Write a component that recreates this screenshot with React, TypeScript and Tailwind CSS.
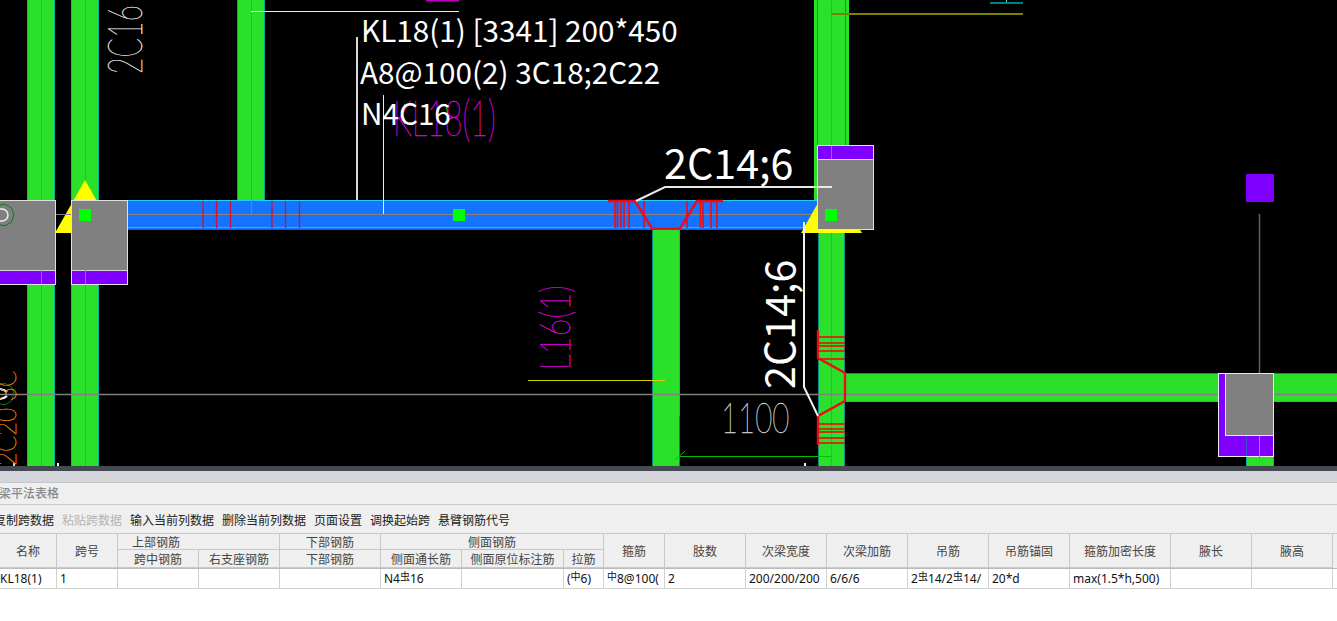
const GREEN = "#2be02b";
const PURPLE = "#8000ff";
const RED = "#f00a14";
const CAD_FONT = "'Noto Sans CJK SC', sans-serif";
const THIN_FONT = "Lato, 'Liberation Sans', sans-serif";

const columnWidths = "grid-cols-[57px_61px_81px_81px_101px_81px_102px_40px_61px_81px_81px_81px_81px_81px_101px_81px_81px]";

function Column({ x, y, w, h, edge = "#00b8a0" }: { x: number; y: number; w: number; h: number; edge?: string }) {
  return (
    <g>
      <rect x={x} y={y} width={w} height={h} fill={GREEN} />
      <rect x={x} y={y} width={1} height={h} fill={edge} />
      <rect x={x + w - 1} y={y} width={1} height={h} fill={edge} />
    </g>
  );
}

function GrayBox({ x, y, w, h, capTop, cap }: { x: number; y: number; w: number; h: number; capTop: boolean; cap: number }) {
  const capY = capTop ? y : y + h - cap;
  return (
    <g>
      <rect x={x + 0.5} y={y + 0.5} width={w} height={h} fill="#808080" />
      <rect x={x + 0.5} y={capY + 0.5} width={w} height={cap} fill={PURPLE} stroke="#d8d8d8" />
      <rect x={x + 0.5} y={y + 0.5} width={w} height={h} fill="none" stroke="#e0e0e0" />
    </g>
  );
}

function Stirrups() {
  const leftBars = [203, 216.5, 230.5, 272, 285.5, 299.5];
  const rightBars = [615, 617.5, 621, 624, 629, 644, 687, 700.5, 703, 711, 717];
  const upperRungs = [337, 343, 346, 351, 359];
  const lowerRungs = [424, 429, 432, 438, 443];
  return (
    <g stroke={RED} fill="none">
      {leftBars.map((x) => (
        <line key={x} x1={x} y1={201} x2={x} y2={228} stroke="#d01030" strokeWidth={1.3} />
      ))}
      {rightBars.map((x) => (
        <line key={x} x1={x} y1={201} x2={x} y2={228} strokeWidth={1.6} />
      ))}
      <polyline points="608,201 635,201 652,228.5 680,228.5 697,201 723,201" strokeWidth={2.4} />
      {upperRungs.map((y) => (
        <line key={y} x1={818} y1={y} x2={845} y2={y} strokeWidth={1.6} />
      ))}
      {lowerRungs.map((y) => (
        <line key={y} x1={818} y1={y} x2={845} y2={y} strokeWidth={1.6} />
      ))}
      <polyline points="818,330 818,358 845,373 845,401 818,416 818,445" strokeWidth={2.4} />
    </g>
  );
}

function Heptagon({ cx, cy }: { cx: number; cy: number }) {
  const points = Array.from({ length: 9 }, (_, i) => {
    const a = (i / 9) * Math.PI * 2;
    return `${(cx + Math.cos(a) * 11).toFixed(1)},${(cy + Math.sin(a) * 11).toFixed(1)}`;
  }).join(" ");
  return <polygon points={points} fill="none" stroke="#0a7a18" strokeWidth={1} />;
}

function Drawing() {
  return (
    <svg width={1337} height={466} viewBox="0 0 1337 466" className="block">
      <rect width={1337} height={466} fill="#000" />

      {/* columns and beams */}
      <Column x={27} y={0} w={28} h={466} />
      <Column x={71} y={0} w={28} h={466} />
      <Column x={237} y={0} w={28} h={200} edge="#00a890" />
      <Column x={652} y={229} w={28} h={237} edge="#008a70" />
      <rect x={814} y={0} width={35} height={200} fill={GREEN} />
      <rect x={817} y={0} width={1} height={230} fill="#0a8f80" />
      <rect x={845} y={0} width={1} height={145} fill="#0a8f80" />
      <Column x={818} y={229} w={27} h={237} edge="#0a8f80" />
      <rect x={845} y={373} width={492} height={28} fill={GREEN} />
      <rect x={845} y={373} width={492} height={1} fill="#0a8f80" />
      <rect x={845} y={401} width={492} height={1} fill="#00c8a0" />
      <Column x={1246} y={456} w={28} h={10} />

      <rect x={127} y={200} width={691} height={29} fill="#1474ff" />
      <rect x={127} y={200} width={691} height={1} fill="#20d0f0" />
      <rect x={127} y={227} width={691} height={1} fill="#40a8ff" />
      <rect x={127} y={229} width={691} height={1} fill="#1a6a90" />

      {/* axis lines */}
      <g stroke="#808080" strokeWidth={1}>
        <line x1={41.5} y1={0} x2={41.5} y2={466} />
        <line x1={85.5} y1={0} x2={85.5} y2={466} />
        <line x1={251.5} y1={0} x2={251.5} y2={214} />
        <line x1={831.5} y1={0} x2={831.5} y2={466} />
        <line x1={679.5} y1={229} x2={679.5} y2={416} />
        <line x1={55} y1={214.5} x2={818} y2={214.5} stroke="#8f8078" />
        <line x1={0} y1={394.5} x2={1337} y2={394.5} strokeWidth={1.4} />
        <line x1={1259.5} y1={214} x2={1259.5} y2={373} stroke="#606060" strokeWidth={1.5} />
      </g>

      {/* supports */}
      <polygon points="85,180 55,233 115,233" fill="#ffff00" />
      <polygon points="831,180 801,233 862,233" fill="#ffff00" />
      <line x1={55} y1={214.5} x2={71} y2={214.5} stroke="#808080" />
      <GrayBox x={-2} y={200} w={57} h={84} capTop={false} cap={14} />
      <GrayBox x={71} y={200} w={56} h={84} capTop={false} cap={14} />
      <GrayBox x={817} y={145} w={56} h={84} capTop cap={14} />
      <line x1={85.5} y1={270} x2={85.5} y2={284} stroke="#808080" />
      <line x1={41.5} y1={270} x2={41.5} y2={284} stroke="#808080" />
      <line x1={831.5} y1={146} x2={831.5} y2={159} stroke="#808080" />
      <rect x={79} y={209} width={12} height={12} fill="#00ff00" />
      <rect x={825} y={209} width={12} height={12} fill="#00ff00" />
      <rect x={453} y={209} width={12} height={12} fill="#00ff00" />
      <rect x={1218.5} y={373.5} width={55} height={83} fill={PURPLE} stroke="#f0f0f0" />
      <rect x={1225.5} y={373.5} width={48} height={62} fill="#808080" stroke="#e8e8e8" />
      <line x1={1246.5} y1={436} x2={1246.5} y2={456} stroke="#3a50d0" />
      <line x1={1259.5} y1={436} x2={1259.5} y2={466} stroke="#a080c0" />
      <rect x={1246} y={174} width={28} height={28} fill={PURPLE} />

      <Stirrups />

      {/* leader and dimension lines */}
      <line x1={251} y1={11.5} x2={459} y2={11.5} stroke="#ffff50" />
      <rect x={426} y={0} width={33} height={1.5} fill="#c000c0" />
      <rect x={831} y={13} width={192} height={2} fill="#808000" />
      <rect x={990} y={2} width={33} height={2} fill="#008080" />
      <rect x={1006} y={0} width={1} height={2} fill="#60e0e0" />
      <line x1={528} y1={380.5} x2={665} y2={380.5} stroke="#d0d000" />
      <line x1={383.5} y1={95} x2={383.5} y2={214} stroke="#ffff50" />
      <line x1={357} y1={37} x2={357} y2={200} stroke="#d8d8d8" strokeWidth={2} />
      <polyline points="636,201 665,187 832,187" fill="none" stroke="#e8e8e8" strokeWidth={2} />
      <polyline points="804,222 804,387 818,416" fill="none" stroke="#f0f0f0" strokeWidth={2} />
      <polyline points="680,456.5 831,456.5" fill="none" stroke="#00c000" />
      <line x1={675} y1={460} x2={685} y2={451} stroke="#00c000" />
      <line x1={826} y1={455} x2={835} y2={449} stroke="#20f020" />
      <rect x={804} y={463} width={2} height={3} fill="#f0f0f0" />
      <rect x={57} y={463} width={2} height={3} fill="#f0f0f0" />
      <rect x={13} y={463} width={2} height={3} fill="#f0d0a0" />

      <Heptagon cx={3} cy={215} />
      <Heptagon cx={3} cy={394} />
      <path d="M-1 209 h3 a6 6 0 0 1 0 12 h-3" fill="none" stroke="#f0f0f0" strokeWidth={1.4} />
      <path d="M0 389 q5 1 7 3 M0 399 q5 -1 7 -3" fill="none" stroke="#ffffff" strokeWidth={2} />

      {/* labels from the model, thin stroke font */}
      <text transform="translate(142,74) rotate(-90) scale(0.92,1.56)" fontFamily={THIN_FONT} fontWeight={100} fontSize={31} fill="#d8d8d8" stroke="#d8d8d8" strokeWidth={0.35}>2C16</text>
      <text transform="translate(393,136) scale(0.85,1.38)" fontFamily={THIN_FONT} fontWeight={100} fontSize={36} fill="#e000e0" stroke="#e000e0" strokeWidth={0.35}>KL18(1)</text>
      <text transform="translate(570,370) rotate(-90) scale(0.86,1.14)" fontFamily={THIN_FONT} fontWeight={100} fontSize={36} fill="#e000e0" stroke="#e000e0" strokeWidth={0.35}>L16(1)</text>
      <text transform="translate(721,433) scale(0.92,1.3)" fontFamily={THIN_FONT} fontWeight={100} fontSize={32} fill="#d0d0d0" stroke="#d0d0d0" strokeWidth={0.35}>1100</text>
      <text transform="translate(16,466) rotate(-90) scale(1,1.2)" fontFamily={THIN_FONT} fontWeight={100} fontSize={24} fill="#f08000" stroke="#f08000" strokeWidth={0.4}>2C20 3C</text>

      <path d="M405 104 q-5 10 0 20 M445 104 q5 10 0 20" fill="none" stroke="#20e020" />

      {/* annotations */}
      <g fontFamily={CAD_FONT} fill="#ffffff" fontSize={29.7}>
        <text x={361} y={42}>KL18(1) [3341] 200*450</text>
        <text x={360} y={84}>A8@100(2) 3C18;2C22</text>
        <text x={361} y={125}>N4C16</text>
        <text x={664} y={179} fontSize={41.3}>2C14;6</text>
        <text transform="translate(795,389) rotate(-90)" fontSize={41.3}>2C14;6</text>
      </g>
    </svg>
  );
}

function Hd({ className = "", children }: { className?: string; children: React.ReactNode }) {
  return (
    <div className={`flex items-center justify-center border-r border-b border-[#c8c8c8] pt-0.5 leading-[12px] text-[#444] ${className}`}>
      {children}
    </div>
  );
}

function Cell({ className = "", children }: { className?: string; children?: React.ReactNode }) {
  return <div className={`flex items-center overflow-hidden whitespace-nowrap border-r border-[#d0d0d0] text-[#111] ${className}`}><span>{children}</span></div>;
}

// rebar grade marks, raised and smaller than the text around them
function Mark({ children }: { children: React.ReactNode }) {
  return <span className="align-[3px] text-[10px]">{children}</span>;
}

function RebarTable() {
  return (
    <div className="text-xs">
      <div className={`grid ${columnWidths} grid-rows-[16px_18px] bg-[#efefef]`}>
        <Hd className="row-span-2">名称</Hd>
        <Hd className="row-span-2">跨号</Hd>
        <Hd className="col-span-2 justify-start pl-[14px]">上部钢筋</Hd>
        <Hd>下部钢筋</Hd>
        <Hd className="col-span-3">侧面钢筋</Hd>
        <Hd className="row-span-2">箍筋</Hd>
        <Hd className="row-span-2">肢数</Hd>
        <Hd className="row-span-2">次梁宽度</Hd>
        <Hd className="row-span-2">次梁加筋</Hd>
        <Hd className="row-span-2">吊筋</Hd>
        <Hd className="row-span-2">吊筋锚固</Hd>
        <Hd className="row-span-2">箍筋加密长度</Hd>
        <Hd className="row-span-2">腋长</Hd>
        <Hd className="row-span-2">腋高</Hd>
        <Hd>跨中钢筋</Hd>
        <Hd>右支座钢筋</Hd>
        <Hd>下部钢筋</Hd>
        <Hd>侧面通长筋</Hd>
        <Hd>侧面原位标注筋</Hd>
        <Hd>拉筋</Hd>
      </div>
      <div className={`grid ${columnWidths} h-[21px] border-b border-[#d0d0d0] border-t border-t-[#bcbcbc] bg-white`}>
        <Cell>KL18(1)</Cell>
        <Cell className="pl-[3px]">1</Cell>
        <Cell />
        <Cell />
        <Cell />
        <Cell className="pl-[3px]">N4<Mark>虫</Mark>16</Cell>
        <Cell />
        <Cell className="pl-[3px]">(<Mark>中</Mark>6)</Cell>
        <Cell className="pl-[3px]"><Mark>中</Mark>8@100(</Cell>
        <Cell className="pl-[3px]">2</Cell>
        <Cell className="pl-[3px]">200/200/200</Cell>
        <Cell className="pl-[3px]">6/6/6</Cell>
        <Cell className="pl-[3px]">2<Mark>虫</Mark>14/2<Mark>虫</Mark>14/</Cell>
        <Cell className="pl-[3px]">20*d</Cell>
        <Cell className="pl-[3px]">max(1.5*h,500)</Cell>
        <Cell />
        <Cell />
      </div>
    </div>
  );
}

export default function App() {
  const tools = ["复制跨数据", "粘贴跨数据", "输入当前列数据", "删除当前列数据", "页面设置", "调换起始跨", "悬臂钢筋代号"];
  return (
    <div className="flex h-[621px] w-[1337px] flex-col overflow-hidden bg-white [font-family:'Noto_Sans','Noto_Sans_CJK_SC',sans-serif]">
      <Drawing />
      <div className="h-[5px] bg-[#434a52]" />
      <div className="h-3 border-b border-[#c4c6cb] bg-[#d4d5da]" />
      <div className="flex h-[22px] items-center border-b border-[#c8c8c8] bg-[#efefef] text-xs font-medium text-[#888]">
        <span className="-ml-px">梁平法表格</span>
      </div>
      <div className="flex h-[29px] items-center gap-2 border-b border-[#c8c8c8] bg-[#efefef] pt-[3px] text-xs text-[#222]">
        {tools.map((t, i) => (
          <span key={t} className={i === 0 ? "-ml-1.5" : i === 1 ? "text-[#b4b4b4]" : ""}>
            {t}
          </span>
        ))}
      </div>
      <RebarTable />
    </div>
  );
}
